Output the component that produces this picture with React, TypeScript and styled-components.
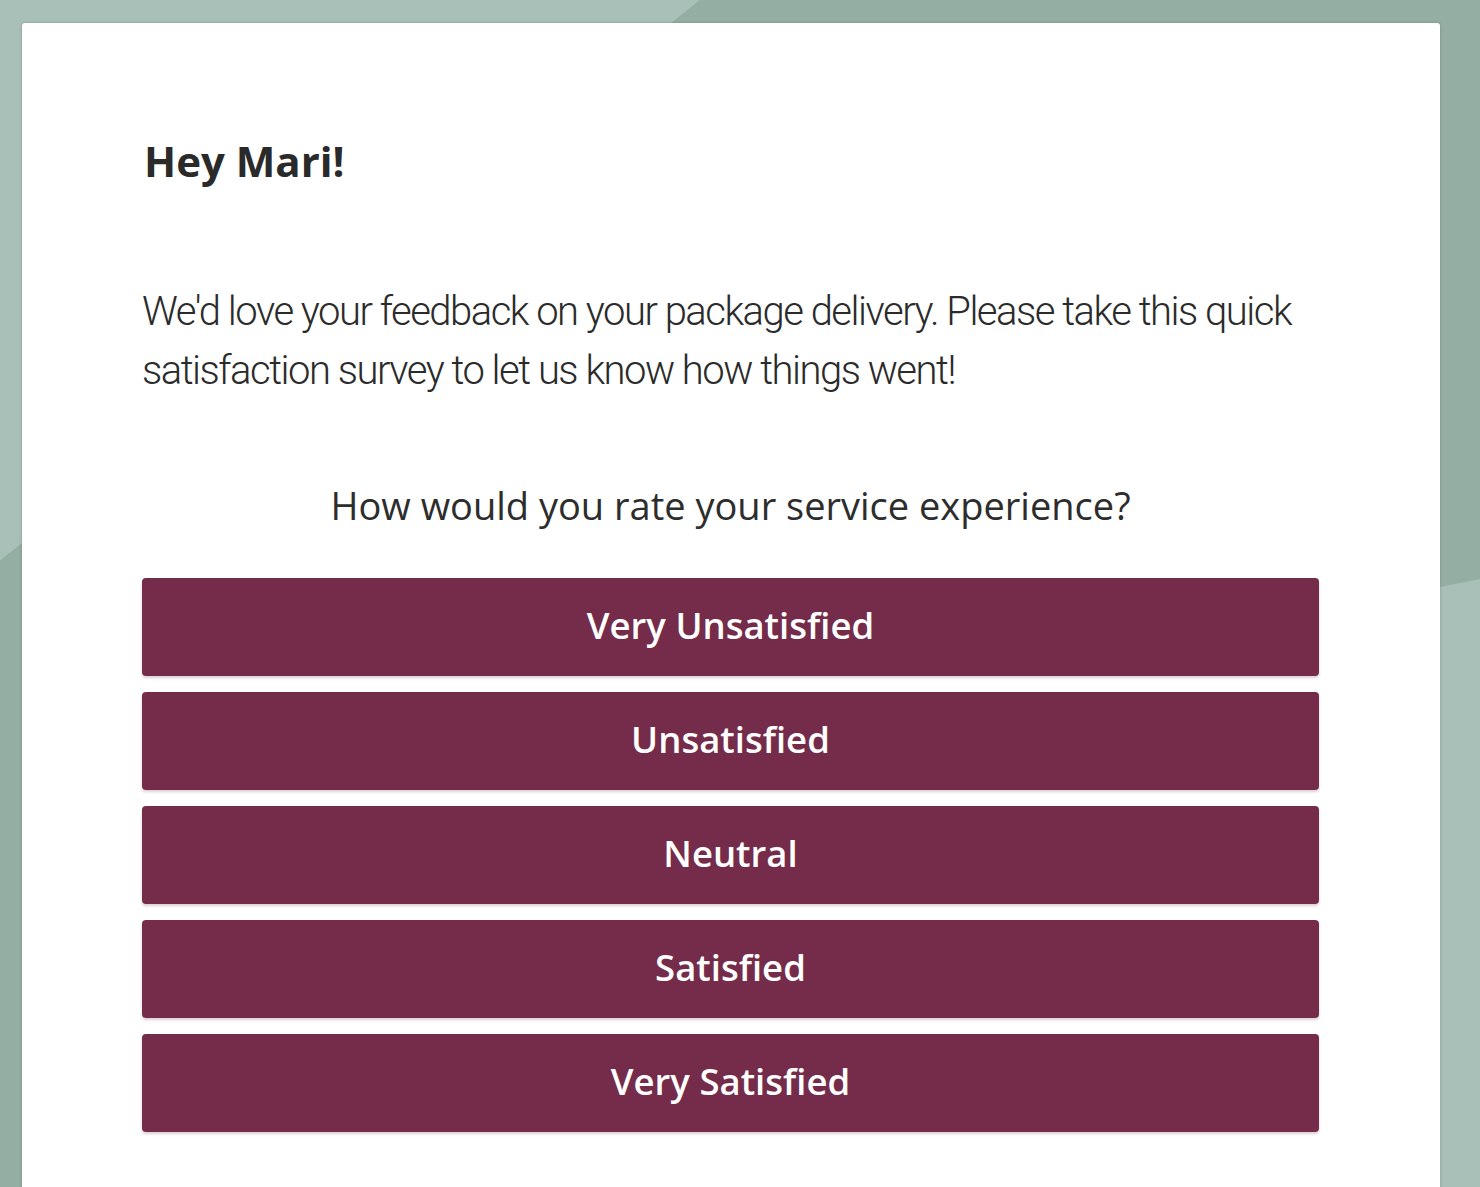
import styled, { createGlobalStyle } from "styled-components";

const GlobalStyle = createGlobalStyle`
  html, body {
    margin: 0;
    padding: 0;
  }
  body {
    font-family: "Open Sans", "Liberation Sans", sans-serif;
  }
`;

const Page = styled.div`
  box-sizing: border-box;
  height: 100vh;
  overflow: hidden;
  padding: 23px 40px 0 22px;
  background-color: #a8c0b7;
  background-image:
    radial-gradient(circle at 1700px 1800px, #a8c0b7 0 1240px, transparent 1241px),
    linear-gradient(141.3deg, #a8c0b7 0 437px, #94aea3 438px);
`;

const Card = styled.div`
  background: #ffffff;
  border-radius: 3px;
  box-shadow: 0 0 3px rgba(60, 80, 70, 0.35);
  min-height: 1300px;
  padding: 113px 121px 0 120px;
`;

const Greeting = styled.h1`
  margin: 0 0 96px 2px;
  font-family: "Open Sans", sans-serif;
  font-weight: 700;
  font-size: 42px;
  line-height: 50px;
  color: #2a2a2a;
`;

const Intro = styled.p`
  margin: 0 0 80px;
  font-family: Roboto, "Liberation Sans", sans-serif;
  font-weight: 300;
  font-size: 40px;
  line-height: 59px;
  letter-spacing: -1.5px;
  color: #2b2b2b;
`;

const Question = styled.h2`
  margin: 0 0 48px;
  text-align: center;
  font-family: "Open Sans", sans-serif;
  font-weight: 400;
  font-size: 38px;
  line-height: 50px;
  color: #2d2d2d;
`;

const Options = styled.div`
  display: flex;
  flex-direction: column;
  gap: 16px;
`;

const OptionButton = styled.button`
  height: 98px;
  padding: 0 0 4px;
  border: none;
  border-radius: 4px;
  background: #742c4a;
  box-shadow: 0 2px 3px rgba(90, 30, 55, 0.22);
  color: #ffffff;
  font-family: "Open Sans", sans-serif;
  font-weight: 600;
  font-size: 36.5px;
  cursor: pointer;
`;

const options = [
  "Very Unsatisfied",
  "Unsatisfied",
  "Neutral",
  "Satisfied",
  "Very Satisfied",
];

function App() {
  return (
    <Page>
      <GlobalStyle />
      <Card>
        <Greeting>Hey Mari!</Greeting>
        <Intro>
          We'd love your feedback on your package delivery. Please take this
          quick satisfaction survey to let us know how things went!
        </Intro>
        <Question>How would you rate your service experience?</Question>
        <Options>
          {options.map((label) => (
            <OptionButton key={label}>{label}</OptionButton>
          ))}
        </Options>
      </Card>
    </Page>
  );
}

export default App;
